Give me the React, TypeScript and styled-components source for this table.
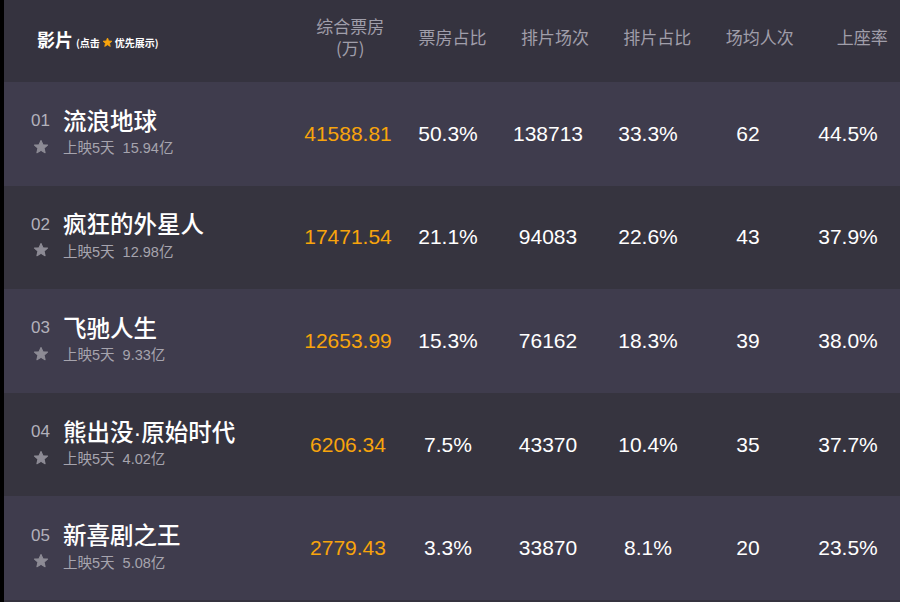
import React from "react";
import styled, { createGlobalStyle } from "styled-components";

const Global = createGlobalStyle`
  html, body { margin: 0; padding: 0; background: #35333f; }
  body { width: 900px; height: 602px; overflow: hidden; }
`;

const Page = styled.div`
  display: flex;
  width: 900px;
  height: 602px;
  overflow: hidden;
  font-family: "Liberation Sans", "Noto Sans CJK SC", sans-serif;
`;

const Edge = styled.div`
  width: 4px;
  flex: none;
  background: #000;
`;

const Table = styled.div`
  flex: 1;
  min-width: 0;
  display: flex;
  flex-direction: column;
  overflow: hidden;
`;

const HeaderRow = styled.div`
  display: grid;
  grid-template-columns: 295px repeat(6, 102.4px);
  height: 82px;
  flex: none;
  background: #35333f;
  align-items: center;
`;

const FilmHead = styled.div`
  padding-left: 33px;
  padding-bottom: 4px;
  display: flex;
  align-items: baseline;
  color: #fff;
  font-family: "Noto Sans CJK SC", sans-serif;
`;

const FilmHeadTitle = styled.span`
  font-size: 18px;
  font-weight: 700;
`;

const FilmHeadHint = styled.span`
  font-size: 10px;
  font-weight: 700;
  margin-left: 3px;
  display: inline-flex;
  align-items: center;
  gap: 2px;
`;

const HeadCell = styled.div`
  text-align: center;
  color: #a09eaa;
  font-size: 17px;
  line-height: 22px;
  font-family: "Noto Sans CJK SC", sans-serif;
  padding-bottom: 8px;
`;

const HeadLine = styled.span`
  display: block;
  height: 22px;
`;

const Row = styled.div<{ $light: boolean }>`
  display: grid;
  grid-template-columns: 294px repeat(6, 100px);
  height: 103.6px;
  flex: none;
  align-items: center;
  background: ${(p) => (p.$light ? "#3f3c4d" : "#36343f")};
`;

const FilmCell = styled.div`
  padding-left: 27px;
  padding-bottom: 5px;
  display: grid;
  grid-template-columns: 32px auto;
  grid-template-rows: 28px 20px;
  row-gap: 3px;
  align-items: center;
`;

const Rank = styled.span`
  color: #b3b1bb;
  font-size: 17px;
  font-family: "Liberation Sans", sans-serif;
  padding-top: 3px;
`;

const Title = styled.span`
  color: #fff;
  font-size: 23.5px;
  font-weight: 500;
  font-family: "Liberation Sans", "Noto Sans CJK SC", sans-serif;
  white-space: nowrap;
`;

const StarBox = styled.span`
  display: flex;
  align-items: center;
  padding-left: 2px;
`;

const Sub = styled.span`
  color: #a6a4ae;
  font-size: 14.5px;
  font-family: "Liberation Sans", "Noto Sans CJK SC", sans-serif;
  white-space: pre;
`;

const NumCell = styled.div<{ $accent?: boolean }>`
  text-align: center;
  font-size: 21px;
  color: ${(p) => (p.$accent ? "#f8a40c" : "#ffffff")};
  font-family: "Liberation Sans", sans-serif;
`;

const Star = ({ size, color }: { size: number; color: string }) => (
  <svg width={size} height={size} viewBox="0 0 24 24">
    <path
      d="M12 2.2l2.9 6.3 6.9.7-5.2 4.6 1.5 6.8L12 17.1l-6.1 3.5 1.5-6.8-5.2-4.6 6.9-.7z"
      fill={color}
      stroke={color}
      strokeWidth="1.6"
      strokeLinejoin="round"
    />
  </svg>
);

const films = [
  { rank: "01", name: "流浪地球", days: "上映5天", total: "15.94亿", box: "41588.81", boxPct: "50.3%", shows: "138713", showPct: "33.3%", avg: "62", seat: "44.5%" },
  { rank: "02", name: "疯狂的外星人", days: "上映5天", total: "12.98亿", box: "17471.54", boxPct: "21.1%", shows: "94083", showPct: "22.6%", avg: "43", seat: "37.9%" },
  { rank: "03", name: "飞驰人生", days: "上映5天", total: "9.33亿", box: "12653.99", boxPct: "15.3%", shows: "76162", showPct: "18.3%", avg: "39", seat: "38.0%" },
  { rank: "04", name: "熊出没·原始时代", days: "上映5天", total: "4.02亿", box: "6206.34", boxPct: "7.5%", shows: "43370", showPct: "10.4%", avg: "35", seat: "37.7%" },
  { rank: "05", name: "新喜剧之王", days: "上映5天", total: "5.08亿", box: "2779.43", boxPct: "3.3%", shows: "33870", showPct: "8.1%", avg: "20", seat: "23.5%" },
];

export default function App() {
  return (
    <>
      <Global />
      <Page>
        <Edge />
        <Table>
          <HeaderRow>
            <FilmHead>
              <FilmHeadTitle>影片</FilmHeadTitle>
              <FilmHeadHint>
                (点击 <Star size={11} color="#f8a40c" /> 优先展示)
              </FilmHeadHint>
            </FilmHead>
            <HeadCell>
              <HeadLine>综合票房</HeadLine>
              <HeadLine>(万)</HeadLine>
            </HeadCell>
            <HeadCell>票房占比</HeadCell>
            <HeadCell>排片场次</HeadCell>
            <HeadCell>排片占比</HeadCell>
            <HeadCell>场均人次</HeadCell>
            <HeadCell>上座率</HeadCell>
          </HeaderRow>
          {films.map((f, i) => (
            <Row key={f.rank} $light={i % 2 === 0}>
              <FilmCell>
                <Rank>{f.rank}</Rank>
                <Title>{f.name}</Title>
                <StarBox>
                  <Star size={16} color="#8d8b95" />
                </StarBox>
                <Sub>{`${f.days}  ${f.total}`}</Sub>
              </FilmCell>
              <NumCell $accent>{f.box}</NumCell>
              <NumCell>{f.boxPct}</NumCell>
              <NumCell>{f.shows}</NumCell>
              <NumCell>{f.showPct}</NumCell>
              <NumCell>{f.avg}</NumCell>
              <NumCell>{f.seat}</NumCell>
            </Row>
          ))}
        </Table>
      </Page>
    </>
  );
}
